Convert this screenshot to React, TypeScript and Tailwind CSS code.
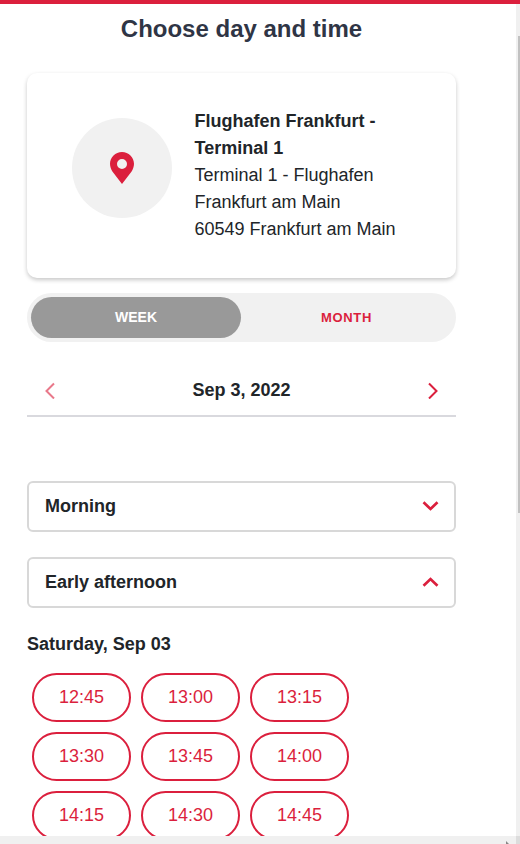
const times = ['12:45', '13:00', '13:15', '13:30', '13:45', '14:00', '14:15', '14:30', '14:45'];

function Chevron({ points, width, height, stroke, className = '' }: { points: string; width: number; height: number; stroke: number; className?: string }) {
  return (
    <svg width={width} height={height} viewBox={`0 0 ${width} ${height}`} fill="none" stroke="#db1f3d" strokeWidth={stroke} className={className}>
      <polyline points={points} />
    </svg>
  );
}

function Accordion({ label, open = false }: { label: string; open?: boolean }) {
  return (
    <button className="flex h-[51px] w-full items-center justify-between rounded-md border-2 border-[#d8d8d8] pr-[15px] pb-px pl-4 font-bold">
      <span>{label}</span>
      <Chevron width={18} height={12} stroke={2.7} points={open ? '2.5,9.7 9.5,3 16.5,9.7' : '2.5,2.3 9.5,9 16.5,2.3'} />
    </button>
  );
}

export default function App() {
  return (
    <div className="flex h-[844px] w-[520px] flex-col overflow-hidden bg-white font-['Liberation_Sans',Arial,sans-serif] text-[18px] leading-[27px] text-[#212529]">
      <div className="h-1 shrink-0 bg-[#db1f3d]" />
      <div className="flex min-h-0 flex-1">
        <main className="w-[516px] overflow-hidden pr-[60px] pl-[27px]">
          <h1 className="mt-[9px] h-8 text-center text-[24px] leading-8 font-bold text-[#2f3545]">Choose day and time</h1>
          <section className="mt-7 flex h-[205px] rounded-[10px] pt-[35px] pl-[45px] shadow-[0_2px_4px_rgba(0,0,0,0.22)]">
            <div className="mt-[10px] flex size-[100px] shrink-0 items-center justify-center rounded-full bg-[#f1f1f1]">
              <svg width="24" height="32" viewBox="0 0 24 32">
                <path fill="#db1f3d" fillRule="evenodd" d="M12 0C5.4 0 0 5.2 0 11.8C0 14.7 1 17.2 2.4 19.4L12 32L21.6 19.4C23 17.2 24 14.7 24 11.8C24 5.2 18.6 0 12 0ZM12 7A5 5 0 1 1 12 17A5 5 0 1 1 12 7Z" />
              </svg>
            </div>
            <address className="ml-[22.5px] not-italic">
              <strong>Flughafen Frankfurt -<br />Terminal 1</strong><br />
              Terminal 1 - Flughafen<br />
              Frankfurt am Main<br />
              60549 Frankfurt am Main
            </address>
          </section>
          <div className="mt-[15px] flex h-[49px] rounded-full bg-[#f1f1f1] p-1 font-bold">
            <button className="w-[210px] rounded-full bg-[#999] text-[14px] text-white">WEEK</button>
            <button className="flex-1 text-[13px] tracking-[0.7px] text-[#db1f3d]">MONTH</button>
          </div>
          <div className="mt-[23px] flex h-[52px] items-center justify-between border-b-2 border-[#d9d9de] px-[17px] font-bold">
            <Chevron width={12} height={18} stroke={2} points="10,2.5 2.5,10 10,17.5" className="opacity-60" />
            <span>Sep 3, 2022</span>
            <Chevron width={12} height={18} stroke={2} points="2,2.5 9.5,10 2,17.5" />
          </div>
          <div className="mt-16 flex flex-col gap-[25px]">
            <Accordion label="Morning" />
            <Accordion label="Early afternoon" open />
          </div>
          <h2 className="mt-[23px] font-bold">Saturday, Sep 03</h2>
          <div className="mt-[15px] ml-[5px] grid grid-cols-[99px_99px_99px] gap-[10px]">
            {times.map((time) => (
              <button key={time} className="h-[49px] rounded-full border-2 border-[#db1f3d] text-[#db1f3d]">{time}</button>
            ))}
          </div>
        </main>
        <div className="flex w-1 flex-col items-end bg-[#f0f0f0] pt-8">
          <div className="h-[477px] w-0.5 bg-[#c1c1c1]" />
        </div>
      </div>
      <div className="flex h-2 shrink-0 items-end bg-[#f0f0f0]">
        <svg className="ml-[506px]" width="4" height="3"><path d="M0 0L3 3H0Z" fill="#888" /></svg>
        <div className="ml-auto h-2 w-1 bg-[#dcdcdc]" />
      </div>
    </div>
  );
}
